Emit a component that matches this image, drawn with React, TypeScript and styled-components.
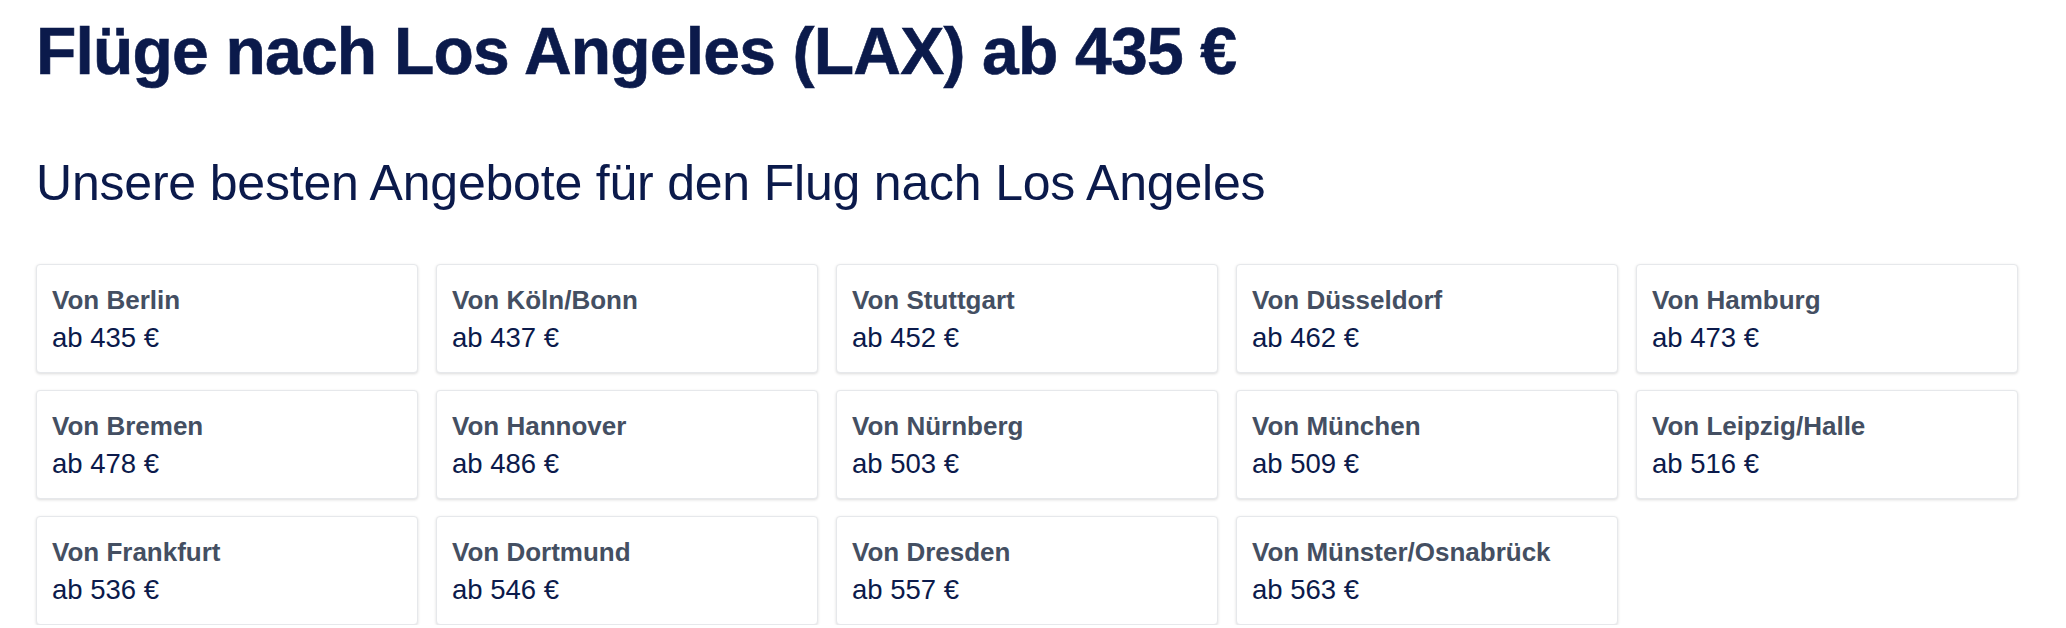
import styled, { createGlobalStyle } from 'styled-components';

type Offer = { city: string; price: number };

const offers: Offer[] = [
  { city: 'Berlin', price: 435 },
  { city: 'Köln/Bonn', price: 437 },
  { city: 'Stuttgart', price: 452 },
  { city: 'Düsseldorf', price: 462 },
  { city: 'Hamburg', price: 473 },
  { city: 'Bremen', price: 478 },
  { city: 'Hannover', price: 486 },
  { city: 'Nürnberg', price: 503 },
  { city: 'München', price: 509 },
  { city: 'Leipzig/Halle', price: 516 },
  { city: 'Frankfurt', price: 536 },
  { city: 'Dortmund', price: 546 },
  { city: 'Dresden', price: 557 },
  { city: 'Münster/Osnabrück', price: 563 },
];

const App = () => {
  return (
    <>
      <GlobalStyle />
      <Page>
        <Title>Flüge nach Los Angeles (LAX) ab 435 €</Title>
        <Subtitle>Unsere besten Angebote für den Flug nach Los Angeles</Subtitle>
        <OfferGrid>
          {offers.map((offer) => (
            <OfferCard key={offer.city} href="#">
              <City>Von {offer.city}</City>
              <Price>ab {offer.price} €</Price>
            </OfferCard>
          ))}
        </OfferGrid>
      </Page>
    </>
  );
};

export default App;

const GlobalStyle = createGlobalStyle`
  body {
    margin: 0;
    background: #ffffff;
    font-family: "Liberation Sans", Arial, sans-serif;
  }
`;

const Page = styled.main`
  padding: 11px 36px 0;
`;

const Title = styled.h1`
  margin: 0;
  font-size: 66px;
  line-height: 80px;
  font-weight: 700;
  letter-spacing: -0.8px;
  color: #0b1a4b;
  -webkit-text-stroke: 0.6px #0b1a4b;
`;

const Subtitle = styled.h2`
  margin: 62px 0 0;
  font-size: 50px;
  line-height: 60px;
  font-weight: 400;
  letter-spacing: -0.2px;
  color: #0b1a4b;
`;

const OfferGrid = styled.section`
  display: grid;
  grid-template-columns: repeat(5, 382px);
  column-gap: 18px;
  row-gap: 17px;
  margin-top: 51px;
`;

const OfferCard = styled.a`
  display: flex;
  flex-direction: column;
  box-sizing: border-box;
  height: 109px;
  padding: 16px 15px 0;
  background: #ffffff;
  border: 1px solid #e6e8eb;
  border-radius: 4px;
  box-shadow: 0 1px 3px rgba(0, 0, 0, 0.14);
  text-decoration: none;
`;

const City = styled.span`
  font-size: 26px;
  line-height: 38px;
  font-weight: 700;
  color: #444f62;
`;

const Price = styled.span`
  font-size: 27.5px;
  line-height: 38px;
  color: #0b1a4b;
`;
